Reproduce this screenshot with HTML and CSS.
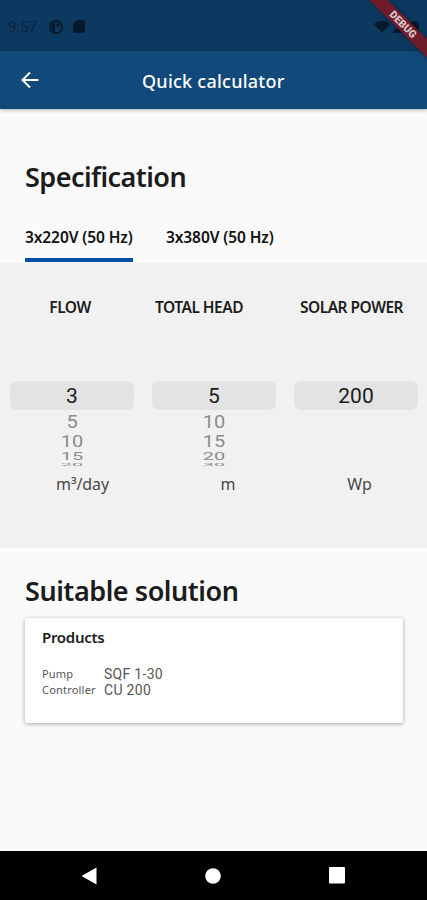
FILE: index.html
```html
<!DOCTYPE html>
<html lang="en">
<head>
  <meta charset="UTF-8" />
  <meta name="viewport" content="width=device-width, initial-scale=1.0"/>
  <title>Quick calculator</title>
  <link rel="stylesheet" href="styles.css">
</head>
<body>
  <div class="screen">
    <div class="status-bar">
      <span class="time">9:57</span>
      <svg class="icon-app" width="14" height="14" viewBox="0 0 14 14">
        <circle cx="7" cy="7" r="6.1" fill="none" stroke="#06192b" stroke-width="1.7"/>
        <path d="M2.500 2.500h3.500v9.500L2.500 11zM7.500 3.500h3v3.500h-3z" fill="#06192b"/>
      </svg>
      <svg class="icon-card" width="12" height="13" viewBox="0 0 12 13">
        <path d="M4 0h6.500q1.500 0 1.500 1.500v10q0 1.500-1.500 1.500h-9Q0 13 0 11.500V4z" fill="#06192b"/>
      </svg>
      <svg class="icon-signal" width="46" height="14" viewBox="0 0 46 14">
        <path d="M0 4q8-6.500 16 0L8 13zM30 1v12H18zM37 2h2V1h4v1h2v11h-8z" fill="#06192b"/>
      </svg>
    </div>

    <div class="app-bar">
      <svg class="back" width="18" height="18" viewBox="0 0 18 18">
        <path d="M17.500 9H2M9 1.500L1.500 9 9 16.500" fill="none" stroke="#fff" stroke-width="2"/>
      </svg>
      <h1>Quick calculator</h1>
    </div>

    <main>
      <h2 class="spec-title">Specification</h2>
      <div class="tabs">
        <div class="tab active">3x220V (50 Hz)</div>
        <div class="tab">3x380V (50 Hz)</div>
      </div>

      <div class="pickers">
        <div class="picker">
          <div class="label">FLOW</div>
          <div class="selected">3</div>
          <div class="wheel">
            <span class="w1">5</span>
            <span class="w2">10</span>
            <span class="w3">15</span>
            <span class="w4">20</span>
          </div>
          <div class="unit unit-flow">m³/day</div>
        </div>
        <div class="picker">
          <div class="label label-head">TOTAL HEAD</div>
          <div class="selected">5</div>
          <div class="wheel">
            <span class="w1">10</span>
            <span class="w2">15</span>
            <span class="w3">20</span>
            <span class="w4">30</span>
          </div>
          <div class="unit unit-head">m</div>
        </div>
        <div class="picker">
          <div class="label label-solar">SOLAR POWER</div>
          <div class="selected">200</div>
          <div class="wheel"></div>
          <div class="unit unit-solar">Wp</div>
        </div>
      </div>

      <h2 class="solution-title">Suitable solution</h2>
      <div class="card">
        <h3>Products</h3>
        <div class="row"><span class="key">Pump</span><span class="value">SQF 1-30</span></div>
        <div class="row"><span class="key">Controller</span><span class="value">CU 200</span></div>
      </div>
    </main>

    <div class="nav-bar">
      <svg width="16" height="18" viewBox="0 0 16 18"><path d="M15.500.500v17L.500 9z" fill="#fff"/></svg>
      <svg width="16" height="16" viewBox="0 0 16 16"><circle cx="8" cy="8" r="7.800" fill="#fff"/></svg>
      <svg width="16" height="17" viewBox="0 0 16 17"><rect width="16" height="16.500" rx="1" fill="#fff"/></svg>
    </div>

    <div class="debug"><span>DEBUG</span></div>
  </div>
</body>
</html>
```
FILE: styles.css
```css
* {
  margin: 0;
  padding: 0;
  box-sizing: border-box;
}

body {
  background: #fafafa;
  font-family: "Noto Sans", "Open Sans", sans-serif;
  color: #1c1c1c;
}

.screen {
  position: relative;
  display: flex;
  flex-direction: column;
  width: 427px;
  height: 900px;
  overflow: hidden;
}

.status-bar {
  display: flex;
  align-items: center;
  height: 51px;
  padding: 2px 0 0 8px;
  background: #0d385f;
}

.time {
  width: 41px;
  font-family: Roboto, sans-serif;
  font-size: 15px;
  color: #082540;
}

.icon-card {
  margin-left: 10px;
}

.icon-signal {
  margin-left: auto;
  margin-right: 7px;
}

.app-bar {
  position: relative;
  display: flex;
  align-items: center;
  height: 58px;
  padding-left: 21px;
  background: #11497b;
  box-shadow: 0 1px 4px rgba(0, 0, 0, 0.3);
}

h1 {
  margin-left: 103px;
  padding-top: 1px;
  font-size: 18px;
  font-weight: 500;
  letter-spacing: 0.25px;
  white-space: nowrap;
  color: #fff;
}

main {
  flex: 1;
  background: #fafafa;
  margin-top: 1px;
}

h2 {
  padding-left: 25px;
  font-size: 27px;
  font-weight: 600;
  line-height: 36px;
  white-space: nowrap;
}

.spec-title {
  margin-top: 49px;
  letter-spacing: -0.55px;
}

.tabs {
  display: flex;
  gap: 33px;
  height: 68px;
  padding: 22px 0 0 25px;
}

.tab {
  width: 108px;
  height: 46px;
  padding-top: 10px;
  font-size: 15.5px;
  font-weight: 600;
  line-height: 20px;
  letter-spacing: -0.1px;
  white-space: nowrap;
  color: #111;
}

.tab.active {
  height: 45px;
  border-bottom: 4px solid #064fa6;
}

.pickers {
  display: flex;
  gap: 18px;
  height: 285px;
  padding: 34px 9px 0 10px;
  background: #f1f1f1;
}

.picker {
  flex: 1;
  text-align: center;
}

.label {
  height: 84px;
  font-size: 15.5px;
  font-weight: 600;
  line-height: 21px;
  letter-spacing: -0.5px;
  white-space: nowrap;
  padding-right: 4px;
}

.label-head {
  padding-right: 30px;
}

.label-solar {
  padding-right: 9px;
}

.selected {
  height: 29px;
  border-radius: 7px;
  background: #e3e3e3;
  font-family: Roboto, sans-serif;
  font-size: 21px;
  line-height: 31px;
}

.wheel {
  display: flex;
  flex-direction: column;
  height: 56px;
  font-family: Roboto, sans-serif;
  font-size: 20px;
  color: #8c8c8c;
}

/* rows flatten towards the bottom of the cylinder */
.wheel span {
  display: block;
  line-height: 22px;
}

.wheel .w1 {
  height: 22px;
  transform: scaleY(0.95);
}

.wheel .w2 {
  height: 17px;
  transform: translateY(-1px) scaleY(0.8);
}

.wheel .w3 {
  height: 12px;
  transform: translateY(-2px) scaleY(0.55);
}

.wheel .w4 {
  height: 5px;
  line-height: 5px;
  transform: translateY(1px) scaleY(0.2);
}

.unit {
  height: 36px;
  padding-top: 6px;
  font-size: 16px;
  line-height: 24px;
  letter-spacing: -0.1px;
  color: #484848;
}

.unit-flow {
  padding-left: 21px;
}

.unit-head {
  padding-left: 28px;
}

.unit-solar {
  padding-left: 7px;
}

.solution-title {
  margin-top: 25px;
  letter-spacing: -0.45px;
}

.card {
  width: 378px;
  height: 105px;
  margin: 9px 0 0 25px;
  padding: 8px 17px;
  border-radius: 2px;
  background: #fff;
  box-shadow: 0 1px 4px rgba(0, 0, 0, 0.35);
}

h3 {
  margin-bottom: 17px;
  font-size: 15px;
  font-weight: 600;
  line-height: 22px;
  letter-spacing: -0.3px;
}

.row {
  display: flex;
  align-items: center;
  height: 16px;
  white-space: nowrap;
  color: #555;
}

.key {
  width: 62px;
  font-size: 11px;
  letter-spacing: 0.2px;
}

.value {
  padding-top: 1px;
  font-family: Roboto, sans-serif;
  font-size: 14px;
  letter-spacing: 0.3px;
}

.nav-bar {
  display: flex;
  align-items: center;
  justify-content: space-between;
  height: 49px;
  padding: 0 82px 0 81px;
  background: #000;
}

.debug {
  position: absolute;
  top: 17.5px;
  left: 340px;
  width: 126px;
  height: 13px;
  background: #701b2a;
  box-shadow: 0 0 5px rgba(0, 0, 0, 0.4);
  transform: rotate(45deg);
  text-align: center;
  font-family: Roboto, sans-serif;
  font-size: 10.5px;
  font-weight: 900;
  line-height: 13px;
  color: #d6c5c8;
}
```
